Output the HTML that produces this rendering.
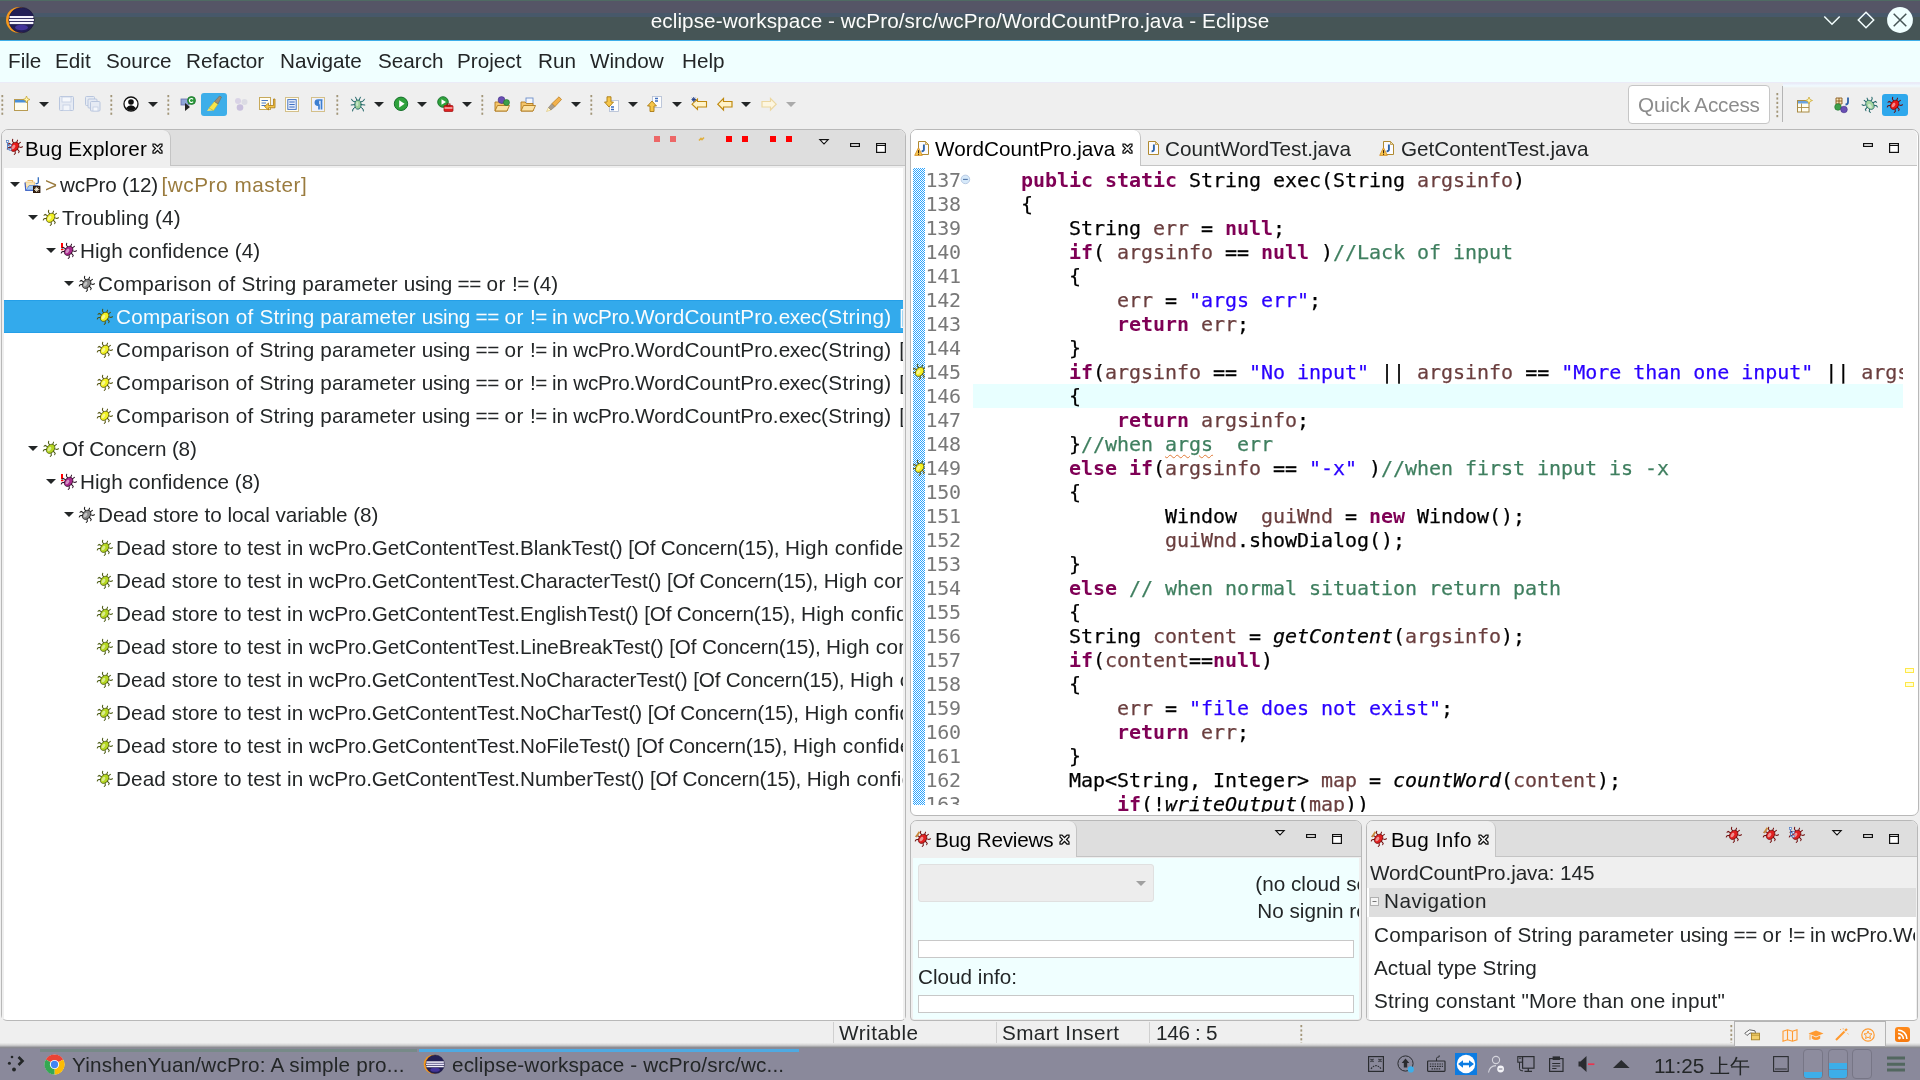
<!DOCTYPE html>
<html><head><meta charset="utf-8"><title>Eclipse</title><style>
html,body{margin:0;padding:0;}
body{width:1920px;height:1080px;position:relative;overflow:hidden;background:#efefef;font-family:"Liberation Sans", sans-serif;font-size:20.7px;color:#232627;}
div,span{position:absolute;white-space:pre;box-sizing:border-box;}
.t{line-height:24px;height:24px;}
svg{position:absolute;overflow:visible;}
.code{font-family:"DejaVu Sans Mono", "Liberation Mono", monospace;font-size:20px;line-height:24px;height:24px;color:#000;left:973px;letter-spacing:-0.041px;-webkit-text-stroke:0.25px currentColor;}
.code span{position:static;}
.ln{font-family:"DejaVu Sans Mono", "Liberation Mono", monospace;font-size:20px;line-height:24px;height:24px;color:#787878;left:926px;letter-spacing:-0.35px;}
.k{color:#7f0055;font-weight:bold;-webkit-text-stroke:0;}
.v{color:#6a3e3e;}
.s{color:#2a00ff;}
.c{color:#3f7f5f;}
.i{font-style:italic;}
.row{height:33px;line-height:33px;letter-spacing:.04px;}
.clip{overflow:hidden;}
</style></head><body>
<div id="root" style="left:0;top:0;width:1920px;height:1080px;will-change:transform">
<div style="left:0px;top:0px;width:1920px;height:41px;background:#465556;"></div>
<div style="left:0px;top:0px;width:1920px;height:13px;background:#555566;"></div>
<div style="left:0px;top:0px;width:1920px;height:1px;background:#4f6a63;"></div>
<div style="left:0px;top:13px;width:1920px;height:4px;background:#47586a;"></div>
<div style="left:0px;top:40px;width:1920px;height:1px;background:#3daee9;"></div>
<div class="t" style="left:0px;top:9px;width:1920px;text-align:center;color:#fcfcfc;letter-spacing:.08px">eclipse-workspace - wcPro/src/wcPro/WordCountPro.java - Eclipse</div>
<svg style="left:5px;top:6px" width="30" height="28" viewBox="0 0 30 28"><circle cx="14" cy="14" r="13" fill="#f7991c"/><circle cx="16.5" cy="14.1" r="12.7" fill="#231f55" stroke="#1a1438" stroke-width="0.6"/><ellipse cx="16.5" cy="21.5" rx="6.5" ry="2.8" fill="#4a38a8" opacity=".85"/><rect x="4.6" y="10" width="23.8" height="2.1" fill="#f4f2fb"/><rect x="4.1" y="13" width="24.8" height="2.1" fill="#f4f2fb"/><rect x="4.6" y="16" width="23.8" height="2.1" fill="#f4f2fb"/></svg>
<svg style="left:1820px;top:8px" width="100" height="26" viewBox="0 0 100 26"><path d="M4.3 8.5 L12 16.3 L19.7 8.5" stroke="#f4ffff" stroke-width="1.5" fill="none"/><path d="M46 4.3 L53.7 12 L46 19.7 L38.3 12 Z" stroke="#f4ffff" stroke-width="1.5" fill="none"/><circle cx="80" cy="12" r="12.9" fill="#f0ffff"/><path d="M73.7 5.7 L86.3 18.3 M86.3 5.7 L73.7 18.3" stroke="#465556" stroke-width="1.5"/></svg>
<div style="left:0px;top:41px;width:1920px;height:42px;background:#f0ffff;"></div>
<div style="left:0px;top:82px;width:1920px;height:1px;background:#ebebf7;"></div>
<div class="t" style="left:8px;top:49px;">File</div>
<div class="t" style="left:55px;top:49px;">Edit</div>
<div class="t" style="left:106px;top:49px;">Source</div>
<div class="t" style="left:186px;top:49px;">Refactor</div>
<div class="t" style="left:280px;top:49px;">Navigate</div>
<div class="t" style="left:378px;top:49px;">Search</div>
<div class="t" style="left:457px;top:49px;">Project</div>
<div class="t" style="left:538px;top:49px;">Run</div>
<div class="t" style="left:590px;top:49px;">Window</div>
<div class="t" style="left:682px;top:49px;">Help</div>
<div style="left:0px;top:83px;width:1920px;height:46px;background:#efefef;"></div>
<svg style="left:1px;top:95px" width="3" height="20" viewBox="0 0 3 20"><rect x="0.4" y="0.0" width="1.8" height="2.2" fill="#a29679"/><rect x="0.4" y="4.4" width="1.8" height="2.2" fill="#a29679"/><rect x="0.4" y="8.8" width="1.8" height="2.2" fill="#a29679"/><rect x="0.4" y="13.2" width="1.8" height="2.2" fill="#a29679"/><rect x="0.4" y="17.6" width="1.8" height="2.2" fill="#a29679"/></svg>
<svg style="left:110px;top:95px" width="3" height="20" viewBox="0 0 3 20"><rect x="0.4" y="0.0" width="1.8" height="2.2" fill="#a29679"/><rect x="0.4" y="4.4" width="1.8" height="2.2" fill="#a29679"/><rect x="0.4" y="8.8" width="1.8" height="2.2" fill="#a29679"/><rect x="0.4" y="13.2" width="1.8" height="2.2" fill="#a29679"/><rect x="0.4" y="17.6" width="1.8" height="2.2" fill="#a29679"/></svg>
<svg style="left:167px;top:95px" width="3" height="20" viewBox="0 0 3 20"><rect x="0.4" y="0.0" width="1.8" height="2.2" fill="#a29679"/><rect x="0.4" y="4.4" width="1.8" height="2.2" fill="#a29679"/><rect x="0.4" y="8.8" width="1.8" height="2.2" fill="#a29679"/><rect x="0.4" y="13.2" width="1.8" height="2.2" fill="#a29679"/><rect x="0.4" y="17.6" width="1.8" height="2.2" fill="#a29679"/></svg>
<svg style="left:336px;top:95px" width="3" height="20" viewBox="0 0 3 20"><rect x="0.4" y="0.0" width="1.8" height="2.2" fill="#a29679"/><rect x="0.4" y="4.4" width="1.8" height="2.2" fill="#a29679"/><rect x="0.4" y="8.8" width="1.8" height="2.2" fill="#a29679"/><rect x="0.4" y="13.2" width="1.8" height="2.2" fill="#a29679"/><rect x="0.4" y="17.6" width="1.8" height="2.2" fill="#a29679"/></svg>
<svg style="left:481px;top:95px" width="3" height="20" viewBox="0 0 3 20"><rect x="0.4" y="0.0" width="1.8" height="2.2" fill="#a29679"/><rect x="0.4" y="4.4" width="1.8" height="2.2" fill="#a29679"/><rect x="0.4" y="8.8" width="1.8" height="2.2" fill="#a29679"/><rect x="0.4" y="13.2" width="1.8" height="2.2" fill="#a29679"/><rect x="0.4" y="17.6" width="1.8" height="2.2" fill="#a29679"/></svg>
<svg style="left:590px;top:95px" width="3" height="20" viewBox="0 0 3 20"><rect x="0.4" y="0.0" width="1.8" height="2.2" fill="#a29679"/><rect x="0.4" y="4.4" width="1.8" height="2.2" fill="#a29679"/><rect x="0.4" y="8.8" width="1.8" height="2.2" fill="#a29679"/><rect x="0.4" y="13.2" width="1.8" height="2.2" fill="#a29679"/><rect x="0.4" y="17.6" width="1.8" height="2.2" fill="#a29679"/></svg>
<svg style="left:39px;top:102px" width="10" height="5" viewBox="0 0 10 5"><path d="M0 0 L10 0 L5.0 5 Z" fill="#232627"/></svg>
<svg style="left:148px;top:102px" width="10" height="5" viewBox="0 0 10 5"><path d="M0 0 L10 0 L5.0 5 Z" fill="#232627"/></svg>
<svg style="left:374px;top:102px" width="10" height="5" viewBox="0 0 10 5"><path d="M0 0 L10 0 L5.0 5 Z" fill="#232627"/></svg>
<svg style="left:417px;top:102px" width="10" height="5" viewBox="0 0 10 5"><path d="M0 0 L10 0 L5.0 5 Z" fill="#232627"/></svg>
<svg style="left:462px;top:102px" width="10" height="5" viewBox="0 0 10 5"><path d="M0 0 L10 0 L5.0 5 Z" fill="#232627"/></svg>
<svg style="left:571px;top:102px" width="10" height="5" viewBox="0 0 10 5"><path d="M0 0 L10 0 L5.0 5 Z" fill="#232627"/></svg>
<svg style="left:628px;top:102px" width="10" height="5" viewBox="0 0 10 5"><path d="M0 0 L10 0 L5.0 5 Z" fill="#232627"/></svg>
<svg style="left:672px;top:102px" width="10" height="5" viewBox="0 0 10 5"><path d="M0 0 L10 0 L5.0 5 Z" fill="#232627"/></svg>
<svg style="left:741px;top:102px" width="10" height="5" viewBox="0 0 10 5"><path d="M0 0 L10 0 L5.0 5 Z" fill="#232627"/></svg>
<svg style="left:786px;top:102px" width="10" height="5" viewBox="0 0 10 5"><path d="M0 0 L10 0 L5.0 5 Z" fill="#aaaaaa"/></svg>
<svg style="left:14px;top:96px" width="16" height="16" viewBox="0 0 16 16"><rect x="0.5" y="3.5" width="13" height="11" fill="#fffdf0" stroke="#b89b52"/><rect x="1" y="4" width="12" height="2.5" fill="#4a90d9"/><path d="M12.5 0 L13.5 2.5 L16 3.5 L13.5 4.5 L12.5 7 L11.5 4.5 L9 3.5 L11.5 2.5 Z" fill="#fff6b0" stroke="#c9a227" stroke-width="0.7"/></svg>
<svg style="left:59px;top:96px" width="16" height="16" viewBox="0 0 16 16"><rect x="0.5" y="0.5" width="14" height="14" rx="1" fill="#e6ebf4" stroke="#b9c6de"/><rect x="3" y="1" width="9" height="5" fill="#f6f8fc" stroke="#c3cee3" stroke-width="0.8"/><rect x="4" y="9" width="7" height="5.5" fill="#f2f5fa" stroke="#c3cee3" stroke-width="0.8"/></svg>
<svg style="left:85px;top:96px" width="16" height="16" viewBox="0 0 16 16"><rect x="0.5" y="0.5" width="9" height="9" rx="1" fill="#e6ebf4" stroke="#b9c6de"/><rect x="3" y="3" width="9" height="9" rx="1" fill="#e6ebf4" stroke="#b9c6de"/><rect x="5.5" y="5.5" width="9.5" height="9.5" rx="1" fill="#e6ebf4" stroke="#b9c6de"/><rect x="8" y="11" width="5" height="4" fill="#f6f8fc" stroke="#c3cee3" stroke-width="0.8"/></svg>
<svg style="left:123px;top:96px" width="16" height="16" viewBox="0 0 16 16"><circle cx="8" cy="8" r="7" fill="#fff" stroke="#111" stroke-width="1.3"/><circle cx="8" cy="6" r="2.8" fill="#111"/><path d="M2.8 12.2 Q8 6.5 13.2 12.2 Q8 17 2.8 12.2 Z" fill="#111"/></svg>
<svg style="left:180px;top:96px" width="16" height="16" viewBox="0 0 16 16"><rect x="1" y="3" width="8" height="6" fill="#8fa6d8" stroke="#6a6fae" stroke-width="0.8"/><path d="M5 7 L5 15 L10 11 Z" fill="#222"/><circle cx="11.5" cy="4.5" r="4" fill="#2c9b3c" stroke="#166b25" stroke-width="0.7"/><path d="M13 3.3 A2 2 0 1 0 13 5.7" stroke="#fff" stroke-width="1.1" fill="none"/></svg>
<div style="left:201px;top:93px;width:26px;height:23px;background:#3daee9;border-radius:3px"></div>
<svg style="left:206px;top:96px" width="16" height="16" viewBox="0 0 16 16"><path d="M1 15 L7 14.5 L3 12 Z" fill="#f3e26b"/><path d="M3 12 L7.5 14.5 L12 8 L8.5 5.5 Z" fill="#f7e54a" stroke="#d1b51a" stroke-width="0.5"/><path d="M8.5 5.5 L12 8 L15.5 1 L13.5 0 Z" fill="#9c8d74" stroke="#6e6250" stroke-width="0.5"/></svg>
<svg style="left:233px;top:96px" width="16" height="16" viewBox="0 0 16 16"><circle cx="5" cy="5" r="3" fill="#d9d3e6"/><circle cx="11.5" cy="6" r="3" fill="#dcdce4"/><circle cx="7" cy="11.5" r="3.3" fill="#c9c0dd"/></svg>
<svg style="left:259px;top:96px" width="16" height="16" viewBox="0 0 16 16"><rect x="0.5" y="1.5" width="11" height="12" fill="#fffdf2" stroke="#c7a95a"/><path d="M2.5 4.5 H9 M2.5 7 H7 M2.5 9.5 H9" stroke="#4a78c2" stroke-width="1"/><path d="M14.5 3 V9.5 H9.5 V7 L5.5 10.5 L9.5 14 V11.8 H16 V3 Z" fill="#f6c64a" stroke="#a97a14" stroke-width="0.8"/></svg>
<svg style="left:285px;top:96px" width="16" height="16" viewBox="0 0 16 16"><rect x="0.5" y="1.5" width="13" height="14" fill="#fffdf2" stroke="#d4c08a"/><rect x="2.8" y="3.6" width="8.4" height="9.8" fill="#e5edfb" stroke="#3d6dc0" stroke-width="0.9"/><path d="M4.3 6 H9.7 M4.3 8.5 H9.7 M4.3 11 H9.7" stroke="#3d6dc0" stroke-width="1"/></svg>
<svg style="left:311px;top:96px" width="16" height="16" viewBox="0 0 16 16"><rect x="0.5" y="1.5" width="13" height="14" fill="#eef1fb" stroke="#d4c08a"/><path d="M11.5 4 H7 A2.6 2.6 0 0 0 7 9.2 H8 V13.5 M10.5 4 V13.5" stroke="#3d7fd0" stroke-width="1.7" fill="none"/><path d="M7 4.3 A2.3 2.3 0 0 0 7 8.9 H8.2 V4.3 Z" fill="#3d7fd0"/></svg>
<svg style="left:350px;top:96px" width="16" height="16" viewBox="0 0 16 16"><g stroke="#1d6466" stroke-width="1" fill="none" stroke-linecap="round"><path d="M5.4 6 L2.6 5 L1.6 3.2 M5 8.6 L1.2 9 M5.4 11 L3 13 L2.6 15 M10.6 6 L13.4 5 L14.4 3.2 M11 8.6 L14.8 9 M10.6 11 L13 13 L13.4 15 M6.8 4 L5.6 1.2 M9.2 4 L10.4 1.2"/><ellipse cx="8" cy="8.6" rx="3.2" ry="4.6" fill="#9ccf9a" stroke="#1d6466" stroke-width="0.9"/><ellipse cx="7.2" cy="8" rx="1.2" ry="2.2" fill="#fff" fill-opacity="0.45" stroke="none"/></g></svg>
<svg style="left:393px;top:96px" width="16" height="16" viewBox="0 0 16 16"><circle cx="8" cy="7.8" r="6.7" fill="#2fa23c" stroke="#14702a" stroke-width="1"/><path d="M6.2 4.2 L11.6 7.8 L6.2 11.4 Z" fill="#fff"/></svg>
<svg style="left:437px;top:96px" width="16" height="16" viewBox="0 0 16 16"><circle cx="6" cy="6" r="5.3" fill="#2fa23c" stroke="#14702a" stroke-width="0.9"/><path d="M4.5 3.2 L9 6 L4.5 8.8 Z" fill="#fff"/><rect x="7" y="9.5" width="9" height="6" rx="1" fill="#e02020" stroke="#9a0d0d" stroke-width="0.7"/><rect x="10" y="8" width="3" height="2" fill="none" stroke="#9a0d0d" stroke-width="0.9"/><rect x="7.5" y="11.5" width="8" height="1" fill="#fff"/></svg>
<svg style="left:494px;top:96px" width="16" height="16" viewBox="0 0 16 16"><path d="M1 6 H6 L7.5 7.5 H13 V15 H1 Z" fill="#f4c56a" stroke="#b17a1d" stroke-width="0.9"/><path d="M1 15 L3.5 9.5 H15.5 L13 15 Z" fill="#fbe2a5" stroke="#b17a1d" stroke-width="0.9"/><circle cx="7.5" cy="4" r="3.4" fill="#6a4fb3" stroke="#43318a" stroke-width="0.6"/><circle cx="12.5" cy="6.5" r="3" fill="#3ea04a" stroke="#1f6e2c" stroke-width="0.6"/></svg>
<svg style="left:520px;top:96px" width="16" height="16" viewBox="0 0 16 16"><rect x="6" y="2" width="7" height="6" fill="#f3f6fc" stroke="#6d8fcb" stroke-width="0.9"/><path d="M1 6 H5 L6.5 7.5 H13 V15 H1 Z" fill="#f4c56a" stroke="#b17a1d" stroke-width="0.9"/><path d="M1 15 L3.5 9.5 H15.5 L13 15 Z" fill="#fbe2a5" stroke="#b17a1d" stroke-width="0.9"/></svg>
<svg style="left:546px;top:96px" width="16" height="16" viewBox="0 0 16 16"><path d="M0.5 15.5 L5 14 L2.5 11.5 Z" fill="#fff7c9" stroke="#d9b95a" stroke-width="0.5"/><path d="M2.5 11.5 L5 14 L9 10.5 L6 7.5 Z" fill="#a99d8f" stroke="#7a7064" stroke-width="0.5"/><path d="M6 7.5 L9 10.5 L15.5 3.5 L13 0.8 Z" fill="#f3b14c" stroke="#b57a1c" stroke-width="0.7"/></svg>
<svg style="left:604px;top:96px" width="16" height="16" viewBox="0 0 16 16"><rect x="5.5" y="4.5" width="9" height="11" fill="#fdfdfd" stroke="#aebbd3" stroke-width="0.8"/><path d="M7 11 H10 M7 13.5 H10" stroke="#3d6dc0" stroke-width="1.4"/><path d="M3 0.8 H7 V6 H9.5 L5 11 L0.5 6 H3 Z" fill="#f6c64a" stroke="#a97a14" stroke-width="0.9"/></svg>
<svg style="left:647px;top:96px" width="16" height="16" viewBox="0 0 16 16"><rect x="5.5" y="0.5" width="9" height="11" fill="#fdfdfd" stroke="#aebbd3" stroke-width="0.8"/><path d="M8 2.5 H11 M8 5 H11" stroke="#3d6dc0" stroke-width="1.4"/><path d="M3 15.5 H7 V10 H9.5 L5 5 L0.5 10 H3 Z" fill="#f6c64a" stroke="#a97a14" stroke-width="0.9"/></svg>
<svg style="left:691px;top:96px" width="16" height="16" viewBox="0 0 16 16"><path d="M6.5 3 L6.5 5.5 H15.5 V11 H6.5 V13.5 L1 8.2 Z" fill="#fff3c8" stroke="#c08a10" stroke-width="1.1"/><path d="M0.5 3.5 H5 M2.7 1 V6 M1 1.8 L4.4 5.2 M4.4 1.8 L1 5.2" stroke="#233f8a" stroke-width="0.9"/></svg>
<svg style="left:717px;top:96px" width="16" height="16" viewBox="0 0 16 16"><path d="M6.5 2.5 L6.5 5.5 H15 V11 H6.5 V14 L0.8 8.2 Z" fill="#fff3c8" stroke="#c08a10" stroke-width="1.2"/></svg>
<svg style="left:761px;top:96px" width="16" height="16" viewBox="0 0 16 16"><path d="M9.5 2.5 L9.5 5.5 H1 V11 H9.5 V14 L15.2 8.2 Z" fill="#fdf6e0" stroke="#ecd7a0" stroke-width="1.2"/></svg>
<div style="left:1628px;top:85px;width:142px;height:39px;background:#ffffff;border:1px solid #c6c6c6;border-radius:4px"></div>
<div class="t" style="left:1638px;top:93px;color:#8c8c8c;letter-spacing:-.2px">Quick Access</div>
<svg style="left:1776px;top:93px" width="3" height="24" viewBox="0 0 3 24"><rect x="0.4" y="0.0" width="1.8" height="2.2" fill="#a29679"/><rect x="0.4" y="4.4" width="1.8" height="2.2" fill="#a29679"/><rect x="0.4" y="8.8" width="1.8" height="2.2" fill="#a29679"/><rect x="0.4" y="13.2" width="1.8" height="2.2" fill="#a29679"/><rect x="0.4" y="17.6" width="1.8" height="2.2" fill="#a29679"/><rect x="0.4" y="22.0" width="1.8" height="2.2" fill="#a29679"/></svg>
<div style="left:1782px;top:86px;width:1px;height:36px;background:#b4b4b4;"></div>
<svg style="left:1797px;top:97px" width="16" height="16" viewBox="0 0 16 16"><rect x="0.5" y="3.5" width="11.5" height="11.5" fill="#fffdf0" stroke="#a98b45"/><rect x="1" y="4" width="10.5" height="2.5" fill="#6ba3e0"/><path d="M4.5 6.5 V15 M0.5 10.5 H12" stroke="#a98b45" stroke-width="0.9"/><path d="M12 0 L13 2.5 L15.5 3.5 L13 4.5 L12 7 L11 4.5 L8.5 3.5 L11 2.5 Z" fill="#fff6b0" stroke="#c9a227" stroke-width="0.7"/></svg>
<svg style="left:1834px;top:97px" width="16" height="16" viewBox="0 0 16 16"><path d="M2 1 H8 V7 H2 Z M5 1 V7 M2 4 H8" fill="#f6e3b8" stroke="#8a5a1c" stroke-width="0.9"/><path d="M14 0.5 V5 Q14 7.5 11.5 7.5" stroke="#2b5fa8" stroke-width="1.8" fill="none"/><circle cx="4" cy="10" r="3.3" fill="#3ea04a" stroke="#1f6e2c" stroke-width="0.6"/><circle cx="10" cy="12.5" r="3.3" fill="#6a4fb3" stroke="#43318a" stroke-width="0.6"/></svg>
<svg style="left:1862px;top:97px" width="16" height="16" viewBox="0 0 16 16"><g transform="rotate(-38 7.8 7.6)" stroke="#1d6466" stroke-width="1" fill="none" stroke-linecap="round"><path d="M5.2 5.6 L2.4 4.6 L1.6 3 M4.9 8 L1.4 8.6 L1 10 M5.4 10.4 L3.2 12.6 L3.4 14.2 M10.4 5.6 L13.2 4.6 L14 3 M10.7 8 L14.2 8.6 L14.6 10 M10.2 10.4 L12.4 12.6 L12.2 14.2 M6.8 3.6 L6 0.8 M8.8 3.6 L9.6 0.8"/><ellipse cx="7.8" cy="7.9" rx="3.7" ry="5.1" fill="#a4d4a0" stroke="#1d6466" stroke-width="0.7"/><ellipse cx="7" cy="8.8" rx="1.5" ry="2.5" fill="#fff" fill-opacity="0.5" stroke="none"/></g></svg>
<div style="left:1783px;top:83px;width:137px;height:5px;background:linear-gradient(#e9e9f8,#f0fbff 60%,#efefef);"></div>
<div style="left:1882px;top:94px;width:26px;height:22px;background:#2fa8ec;border-radius:3px"></div>
<svg style="left:1887px;top:97px" width="16" height="16" viewBox="0 0 16 16"><g transform="rotate(38 7.8 7.6)" stroke="#6e0a0a" stroke-width="1" fill="none" stroke-linecap="round"><path d="M5.2 5.6 L2.4 4.6 L1.6 3 M4.9 8 L1.4 8.6 L1 10 M5.4 10.4 L3.2 12.6 L3.4 14.2 M10.4 5.6 L13.2 4.6 L14 3 M10.7 8 L14.2 8.6 L14.6 10 M10.2 10.4 L12.4 12.6 L12.2 14.2 M6.8 3.6 L6 0.8 M8.8 3.6 L9.6 0.8"/><ellipse cx="7.8" cy="7.9" rx="3.7" ry="5.1" fill="#e81818" stroke="#6e0a0a" stroke-width="0.7"/><ellipse cx="7" cy="8.8" rx="1.5" ry="2.5" fill="#fff" fill-opacity="0.5" stroke="none"/></g></svg>
<div style="left:1px;top:129px;width:905px;height:892px;background:#ffffff;border:1px solid #b8b8b8;border-radius:7px 7px 5px 6px"></div>
<div style="left:2px;top:130px;width:903px;height:35px;background:#dedede;border-radius:6px 6px 0 0"></div>
<div style="left:2px;top:165px;width:903px;height:1px;background:#c4c4c4;"></div>
<div style="left:2px;top:130px;width:169px;height:36px;background:#efefef;border-radius:6px 8px 0 0;border-right:1px solid #c4c4c4"></div>
<svg style="left:7px;top:139px" width="16" height="16" viewBox="0 0 16 16"><g transform="rotate(38 7.8 7.6)" stroke="#6e0a0a" stroke-width="1" fill="none" stroke-linecap="round"><path d="M5.2 5.6 L2.4 4.6 L1.6 3 M4.9 8 L1.4 8.6 L1 10 M5.4 10.4 L3.2 12.6 L3.4 14.2 M10.4 5.6 L13.2 4.6 L14 3 M10.7 8 L14.2 8.6 L14.6 10 M10.2 10.4 L12.4 12.6 L12.2 14.2 M6.8 3.6 L6 0.8 M8.8 3.6 L9.6 0.8"/><ellipse cx="7.8" cy="7.9" rx="3.7" ry="5.1" fill="#e81818" stroke="#6e0a0a" stroke-width="0.7"/><ellipse cx="7" cy="8.8" rx="1.5" ry="2.5" fill="#fff" fill-opacity="0.5" stroke="none"/></g></svg>
<svg style="left:6px;top:140px" width="8" height="12" viewBox="0 0 8 12"><path d="M1.5 1.5 V9.2 H3.5 M1.5 5.5 H3.5" stroke="#4a78c2" stroke-width="0.9" fill="none"/><rect x="0.5" y="0.5" width="2" height="2" fill="#fff" stroke="#4a78c2" stroke-width="0.7"/><rect x="3.2" y="4.5" width="2" height="2" fill="#fff" stroke="#4a78c2" stroke-width="0.7"/><rect x="3.2" y="8.2" width="2" height="2" fill="#fff" stroke="#4a78c2" stroke-width="0.7"/></svg>
<div class="t" style="left:25px;top:137px;color:#000;letter-spacing:.2px">Bug Explorer</div>
<svg style="left:152px;top:143px" width="11" height="11" viewBox="0 0 11 11"><path d="M1 1 L3 1 L5.5 3.5 L8 1 L10 1 L10 3 L7.5 5.5 L10 8 L10 10 L8 10 L5.5 7.5 L3 10 L1 10 L1 8 L3.5 5.5 L1 3 Z" fill="#fdfdfd" stroke="#111" stroke-width="1.25"/></svg>
<div style="left:654px;top:136px;width:6px;height:6px;background:#ec6767;"></div>
<div style="left:670px;top:136px;width:6px;height:6px;background:#ec6767;"></div>
<div style="left:726px;top:136px;width:6px;height:6px;background:#ff0000;"></div>
<div style="left:742px;top:136px;width:6px;height:6px;background:#ff0000;"></div>
<div style="left:770px;top:136px;width:6px;height:6px;background:#ff0000;"></div>
<div style="left:786px;top:136px;width:6px;height:6px;background:#ff0000;"></div>
<svg style="left:698px;top:136px" width="7" height="6" viewBox="0 0 7 6"><path d="M1 4.5 L3 2.5 L4 3.5 L6 1.5" stroke="#e0b040" stroke-width="1.6" fill="none"/></svg>
<svg style="left:819px;top:139px" width="10" height="6" viewBox="0 0 10 6"><path d="M0.8 0.6 L9.2 0.6 L5 5 Z" fill="#fff" stroke="#111" stroke-width="1.1"/></svg>
<svg style="left:850px;top:143px" width="10" height="4" viewBox="0 0 10 4"><rect x="0.6" y="0.6" width="8.8" height="2.8" fill="#fff" stroke="#111" stroke-width="1.2"/></svg>
<svg style="left:876px;top:143px" width="10" height="10" viewBox="0 0 10 10"><rect x="0.6" y="0.6" width="8.8" height="8.8" fill="#fff" stroke="#111" stroke-width="1.2"/><path d="M0.6 2.5 H9.4" stroke="#111" stroke-width="1"/></svg>
<div style="left:2px;top:166px;width:902px;height:2px;background:#efefef;"></div>
<div style="left:2px;top:166px;width:2px;height:853px;background:#efefef;"></div>
<div style="left:903px;top:166px;width:2px;height:853px;background:#f0f0f0;"></div>
<div class="clip" style="left:3px;top:166px;width:900px;height:853px">
<svg style="left:7px;top:16px" width="10" height="5" viewBox="0 0 10 5"><path d="M0 0 L10 0 L5.0 5 Z" fill="#232627"/></svg>
<svg style="left:21px;top:11px" width="17" height="16" viewBox="0 0 17 16"><path d="M3.5 3.5 H8.5 V5" stroke="#e8b868" stroke-width="1.2" fill="none"/><path d="M1.5 5 H10.5 V10 H1.5 Z" fill="#fbe6b4" stroke="#e9c27a" stroke-width="0.8"/><path d="M1 5.5 L1.8 13.5 H11" stroke="#3f5fc0" stroke-width="1.2" fill="none"/><path d="M2.2 13 L5.2 8.5 H14 L11 13 Z" fill="#a9cdf3" stroke="#5a86d8" stroke-width="0.8"/><path d="M14.3 0.3 V5 Q14.3 6.8 12.3 6.6 L11.6 6.3" stroke="#2f6cc0" stroke-width="1.3" fill="none"/><rect x="9" y="8.8" width="7.4" height="7.2" fill="#2a170a"/><path d="M12.7 9.8 V15 M10.1 12.4 H15.3 M10.9 10.6 L14.5 14.2 M14.5 10.6 L10.9 14.2" stroke="#fff8e0" stroke-width="0.9"/></svg>
<div class="row" style="left:42px;top:2px;color:#232627"><span style="color:#9a7b3e;left:0;top:0">&gt;</span><span style="left:15px;top:0;letter-spacing:-.2px">wcPro (12)</span><span style="color:#9a7b3e;letter-spacing:.56px;left:116.5px;top:0">[wcPro master]</span></div>
<svg style="left:25px;top:49px" width="10" height="5" viewBox="0 0 10 5"><path d="M0 0 L10 0 L5.0 5 Z" fill="#232627"/></svg>
<svg style="left:40px;top:44px" width="16" height="16" viewBox="0 0 16 16"><g transform="rotate(38 7.8 7.6)" stroke="#4f4f0a" stroke-width="1" fill="none" stroke-linecap="round"><path d="M5.2 5.6 L2.4 4.6 L1.6 3 M4.9 8 L1.4 8.6 L1 10 M5.4 10.4 L3.2 12.6 L3.4 14.2 M10.4 5.6 L13.2 4.6 L14 3 M10.7 8 L14.2 8.6 L14.6 10 M10.2 10.4 L12.4 12.6 L12.2 14.2 M6.8 3.6 L6 0.8 M8.8 3.6 L9.6 0.8"/><ellipse cx="7.8" cy="7.9" rx="3.7" ry="5.1" fill="#f0f020" stroke="#4f4f0a" stroke-width="0.7"/><ellipse cx="7" cy="8.8" rx="1.5" ry="2.5" fill="#fff" fill-opacity="0.5" stroke="none"/></g></svg>
<div class="row" style="left:59px;top:35px;color:#232627"><span style="position:static;letter-spacing:.18px">Troubling (4)</span></div>
<svg style="left:43px;top:82px" width="10" height="5" viewBox="0 0 10 5"><path d="M0 0 L10 0 L5.0 5 Z" fill="#232627"/></svg>
<svg style="left:58px;top:77px" width="16" height="16" viewBox="0 0 16 16"><rect x="0" y="0" width="2" height="5" fill="#f00"/><rect x="0" y="6" width="2.5" height="1.2" fill="#f00"/><g transform="rotate(38 7.8 7.6)" stroke="#2a0a22" stroke-width="1" fill="none" stroke-linecap="round"><path d="M5.2 5.6 L2.4 4.6 L1.6 3 M4.9 8 L1.4 8.6 L1 10 M5.4 10.4 L3.2 12.6 L3.4 14.2 M10.4 5.6 L13.2 4.6 L14 3 M10.7 8 L14.2 8.6 L14.6 10 M10.2 10.4 L12.4 12.6 L12.2 14.2 M6.8 3.6 L6 0.8 M8.8 3.6 L9.6 0.8"/><ellipse cx="7.8" cy="7.9" rx="3.7" ry="5.1" fill="#a8288c" stroke="#2a0a22" stroke-width="0.7"/><ellipse cx="7" cy="8.8" rx="1.5" ry="2.5" fill="#fff" fill-opacity="0.5" stroke="none"/></g></svg>
<div class="row" style="left:77px;top:68px;color:#232627">High confidence (4)</div>
<svg style="left:61px;top:115px" width="10" height="5" viewBox="0 0 10 5"><path d="M0 0 L10 0 L5.0 5 Z" fill="#232627"/></svg>
<svg style="left:76px;top:110px" width="16" height="16" viewBox="0 0 16 16"><g transform="rotate(38 7.8 7.6)" stroke="#111" stroke-width="1" fill="none" stroke-linecap="round"><path d="M5.2 5.6 L2.4 4.6 L1.6 3 M4.9 8 L1.4 8.6 L1 10 M5.4 10.4 L3.2 12.6 L3.4 14.2 M10.4 5.6 L13.2 4.6 L14 3 M10.7 8 L14.2 8.6 L14.6 10 M10.2 10.4 L12.4 12.6 L12.2 14.2 M6.8 3.6 L6 0.8 M8.8 3.6 L9.6 0.8"/><ellipse cx="7.8" cy="7.9" rx="3.7" ry="5.1" fill="#8a8a8a" stroke="#111" stroke-width="0.7"/><ellipse cx="7" cy="8.8" rx="1.5" ry="2.5" fill="#fff" fill-opacity="0.5" stroke="none"/></g></svg>
<div class="row" style="left:95px;top:101px;color:#232627"><span style="position:static;letter-spacing:0.23px">Comparison of </span><span style="position:static;letter-spacing:0.14px">String parameter </span><span style="position:static;letter-spacing:-0.25px">using == </span><span style="position:static;letter-spacing:0.39px">or </span><span style="position:static;letter-spacing:-0.5px">!= </span><span style="position:static;margin-left:-1.2px">(4)</span></div>
<div style="left:1px;top:134px;width:900px;height:33px;background:#33aaec;border-top:1px solid #249fe8;border-bottom:1px solid #249fe8"></div>
<svg style="left:94px;top:143px" width="16" height="16" viewBox="0 0 16 16"><g transform="rotate(38 7.8 7.6)" stroke="#4f4f0a" stroke-width="1" fill="none" stroke-linecap="round"><path d="M5.2 5.6 L2.4 4.6 L1.6 3 M4.9 8 L1.4 8.6 L1 10 M5.4 10.4 L3.2 12.6 L3.4 14.2 M10.4 5.6 L13.2 4.6 L14 3 M10.7 8 L14.2 8.6 L14.6 10 M10.2 10.4 L12.4 12.6 L12.2 14.2 M6.8 3.6 L6 0.8 M8.8 3.6 L9.6 0.8"/><ellipse cx="7.8" cy="7.9" rx="3.7" ry="5.1" fill="#f0f020" stroke="#4f4f0a" stroke-width="0.7"/><ellipse cx="7" cy="8.8" rx="1.5" ry="2.5" fill="#fff" fill-opacity="0.5" stroke="none"/></g></svg>
<div class="row" style="left:113px;top:134px;color:#fcfcfc"><span style="position:static;letter-spacing:0.23px">Comparison of </span><span style="position:static;letter-spacing:0.14px">String parameter </span><span style="position:static;letter-spacing:-0.25px">using == </span><span style="position:static;letter-spacing:0.39px">or </span><span style="position:static;letter-spacing:-0.5px">!= </span><span style="position:static;letter-spacing:-0.18px">in </span><span style="position:static;letter-spacing:-0.26px">wcPro.</span><span style="position:static;letter-spacing:0.12px">WordCountPro.</span><span style="position:static;letter-spacing:-0.35px">exec</span><span style="position:static;letter-spacing:0.34px">(String)</span><span style="position:static;margin-left:-4px">  [Troubling(11), High confidence]</span></div>
<svg style="left:94px;top:176px" width="16" height="16" viewBox="0 0 16 16"><g transform="rotate(38 7.8 7.6)" stroke="#4f4f0a" stroke-width="1" fill="none" stroke-linecap="round"><path d="M5.2 5.6 L2.4 4.6 L1.6 3 M4.9 8 L1.4 8.6 L1 10 M5.4 10.4 L3.2 12.6 L3.4 14.2 M10.4 5.6 L13.2 4.6 L14 3 M10.7 8 L14.2 8.6 L14.6 10 M10.2 10.4 L12.4 12.6 L12.2 14.2 M6.8 3.6 L6 0.8 M8.8 3.6 L9.6 0.8"/><ellipse cx="7.8" cy="7.9" rx="3.7" ry="5.1" fill="#f0f020" stroke="#4f4f0a" stroke-width="0.7"/><ellipse cx="7" cy="8.8" rx="1.5" ry="2.5" fill="#fff" fill-opacity="0.5" stroke="none"/></g></svg>
<div class="row" style="left:113px;top:167px;color:#232627"><span style="position:static;letter-spacing:0.23px">Comparison of </span><span style="position:static;letter-spacing:0.14px">String parameter </span><span style="position:static;letter-spacing:-0.25px">using == </span><span style="position:static;letter-spacing:0.39px">or </span><span style="position:static;letter-spacing:-0.5px">!= </span><span style="position:static;letter-spacing:-0.18px">in </span><span style="position:static;letter-spacing:-0.26px">wcPro.</span><span style="position:static;letter-spacing:0.12px">WordCountPro.</span><span style="position:static;letter-spacing:-0.35px">exec</span><span style="position:static;letter-spacing:0.34px">(String)</span><span style="position:static;margin-left:-4px">  [Troubling(11), High confidence]</span></div>
<svg style="left:94px;top:209px" width="16" height="16" viewBox="0 0 16 16"><g transform="rotate(38 7.8 7.6)" stroke="#4f4f0a" stroke-width="1" fill="none" stroke-linecap="round"><path d="M5.2 5.6 L2.4 4.6 L1.6 3 M4.9 8 L1.4 8.6 L1 10 M5.4 10.4 L3.2 12.6 L3.4 14.2 M10.4 5.6 L13.2 4.6 L14 3 M10.7 8 L14.2 8.6 L14.6 10 M10.2 10.4 L12.4 12.6 L12.2 14.2 M6.8 3.6 L6 0.8 M8.8 3.6 L9.6 0.8"/><ellipse cx="7.8" cy="7.9" rx="3.7" ry="5.1" fill="#f0f020" stroke="#4f4f0a" stroke-width="0.7"/><ellipse cx="7" cy="8.8" rx="1.5" ry="2.5" fill="#fff" fill-opacity="0.5" stroke="none"/></g></svg>
<div class="row" style="left:113px;top:200px;color:#232627"><span style="position:static;letter-spacing:0.23px">Comparison of </span><span style="position:static;letter-spacing:0.14px">String parameter </span><span style="position:static;letter-spacing:-0.25px">using == </span><span style="position:static;letter-spacing:0.39px">or </span><span style="position:static;letter-spacing:-0.5px">!= </span><span style="position:static;letter-spacing:-0.18px">in </span><span style="position:static;letter-spacing:-0.26px">wcPro.</span><span style="position:static;letter-spacing:0.12px">WordCountPro.</span><span style="position:static;letter-spacing:-0.35px">exec</span><span style="position:static;letter-spacing:0.34px">(String)</span><span style="position:static;margin-left:-4px">  [Troubling(11), High confidence]</span></div>
<svg style="left:94px;top:242px" width="16" height="16" viewBox="0 0 16 16"><g transform="rotate(38 7.8 7.6)" stroke="#4f4f0a" stroke-width="1" fill="none" stroke-linecap="round"><path d="M5.2 5.6 L2.4 4.6 L1.6 3 M4.9 8 L1.4 8.6 L1 10 M5.4 10.4 L3.2 12.6 L3.4 14.2 M10.4 5.6 L13.2 4.6 L14 3 M10.7 8 L14.2 8.6 L14.6 10 M10.2 10.4 L12.4 12.6 L12.2 14.2 M6.8 3.6 L6 0.8 M8.8 3.6 L9.6 0.8"/><ellipse cx="7.8" cy="7.9" rx="3.7" ry="5.1" fill="#f0f020" stroke="#4f4f0a" stroke-width="0.7"/><ellipse cx="7" cy="8.8" rx="1.5" ry="2.5" fill="#fff" fill-opacity="0.5" stroke="none"/></g></svg>
<div class="row" style="left:113px;top:233px;color:#232627"><span style="position:static;letter-spacing:0.23px">Comparison of </span><span style="position:static;letter-spacing:0.14px">String parameter </span><span style="position:static;letter-spacing:-0.25px">using == </span><span style="position:static;letter-spacing:0.39px">or </span><span style="position:static;letter-spacing:-0.5px">!= </span><span style="position:static;letter-spacing:-0.18px">in </span><span style="position:static;letter-spacing:-0.26px">wcPro.</span><span style="position:static;letter-spacing:0.12px">WordCountPro.</span><span style="position:static;letter-spacing:-0.35px">exec</span><span style="position:static;letter-spacing:0.34px">(String)</span><span style="position:static;margin-left:-4px">  [Troubling(11), High confidence]</span></div>
<svg style="left:25px;top:280px" width="10" height="5" viewBox="0 0 10 5"><path d="M0 0 L10 0 L5.0 5 Z" fill="#232627"/></svg>
<svg style="left:40px;top:275px" width="16" height="16" viewBox="0 0 16 16"><g transform="rotate(38 7.8 7.6)" stroke="#45550c" stroke-width="1" fill="none" stroke-linecap="round"><path d="M5.2 5.6 L2.4 4.6 L1.6 3 M4.9 8 L1.4 8.6 L1 10 M5.4 10.4 L3.2 12.6 L3.4 14.2 M10.4 5.6 L13.2 4.6 L14 3 M10.7 8 L14.2 8.6 L14.6 10 M10.2 10.4 L12.4 12.6 L12.2 14.2 M6.8 3.6 L6 0.8 M8.8 3.6 L9.6 0.8"/><ellipse cx="7.8" cy="7.9" rx="3.7" ry="5.1" fill="#b4d620" stroke="#45550c" stroke-width="0.7"/><ellipse cx="7" cy="8.8" rx="1.5" ry="2.5" fill="#fff" fill-opacity="0.5" stroke="none"/></g></svg>
<div class="row" style="left:59px;top:266px;color:#232627"><span style="position:static;letter-spacing:-.15px">Of Concern (8)</span></div>
<svg style="left:43px;top:313px" width="10" height="5" viewBox="0 0 10 5"><path d="M0 0 L10 0 L5.0 5 Z" fill="#232627"/></svg>
<svg style="left:58px;top:308px" width="16" height="16" viewBox="0 0 16 16"><rect x="0" y="0" width="2" height="5" fill="#f00"/><rect x="0" y="6" width="2.5" height="1.2" fill="#f00"/><g transform="rotate(38 7.8 7.6)" stroke="#2a0a22" stroke-width="1" fill="none" stroke-linecap="round"><path d="M5.2 5.6 L2.4 4.6 L1.6 3 M4.9 8 L1.4 8.6 L1 10 M5.4 10.4 L3.2 12.6 L3.4 14.2 M10.4 5.6 L13.2 4.6 L14 3 M10.7 8 L14.2 8.6 L14.6 10 M10.2 10.4 L12.4 12.6 L12.2 14.2 M6.8 3.6 L6 0.8 M8.8 3.6 L9.6 0.8"/><ellipse cx="7.8" cy="7.9" rx="3.7" ry="5.1" fill="#a8288c" stroke="#2a0a22" stroke-width="0.7"/><ellipse cx="7" cy="8.8" rx="1.5" ry="2.5" fill="#fff" fill-opacity="0.5" stroke="none"/></g></svg>
<div class="row" style="left:77px;top:299px;color:#232627">High confidence (8)</div>
<svg style="left:61px;top:346px" width="10" height="5" viewBox="0 0 10 5"><path d="M0 0 L10 0 L5.0 5 Z" fill="#232627"/></svg>
<svg style="left:76px;top:341px" width="16" height="16" viewBox="0 0 16 16"><g transform="rotate(38 7.8 7.6)" stroke="#111" stroke-width="1" fill="none" stroke-linecap="round"><path d="M5.2 5.6 L2.4 4.6 L1.6 3 M4.9 8 L1.4 8.6 L1 10 M5.4 10.4 L3.2 12.6 L3.4 14.2 M10.4 5.6 L13.2 4.6 L14 3 M10.7 8 L14.2 8.6 L14.6 10 M10.2 10.4 L12.4 12.6 L12.2 14.2 M6.8 3.6 L6 0.8 M8.8 3.6 L9.6 0.8"/><ellipse cx="7.8" cy="7.9" rx="3.7" ry="5.1" fill="#8a8a8a" stroke="#111" stroke-width="0.7"/><ellipse cx="7" cy="8.8" rx="1.5" ry="2.5" fill="#fff" fill-opacity="0.5" stroke="none"/></g></svg>
<div class="row" style="left:95px;top:332px;color:#232627"><span style="position:static;letter-spacing:-.04px">Dead store to local variable (8)</span></div>
<svg style="left:94px;top:374px" width="16" height="16" viewBox="0 0 16 16"><g transform="rotate(38 7.8 7.6)" stroke="#45550c" stroke-width="1" fill="none" stroke-linecap="round"><path d="M5.2 5.6 L2.4 4.6 L1.6 3 M4.9 8 L1.4 8.6 L1 10 M5.4 10.4 L3.2 12.6 L3.4 14.2 M10.4 5.6 L13.2 4.6 L14 3 M10.7 8 L14.2 8.6 L14.6 10 M10.2 10.4 L12.4 12.6 L12.2 14.2 M6.8 3.6 L6 0.8 M8.8 3.6 L9.6 0.8"/><ellipse cx="7.8" cy="7.9" rx="3.7" ry="5.1" fill="#b4d620" stroke="#45550c" stroke-width="0.7"/><ellipse cx="7" cy="8.8" rx="1.5" ry="2.5" fill="#fff" fill-opacity="0.5" stroke="none"/></g></svg>
<div class="row" style="left:113px;top:365px;color:#232627"><span style="position:static;letter-spacing:.1px">Dead store to test in </span><span style="position:static;letter-spacing:-.085px">wcPro.GetContentTest.BlankTest() </span><span style="position:static;letter-spacing:-.18px">[Of Concern(15), </span><span style="position:static;letter-spacing:.3px">High confidence]</span></div>
<svg style="left:94px;top:407px" width="16" height="16" viewBox="0 0 16 16"><g transform="rotate(38 7.8 7.6)" stroke="#45550c" stroke-width="1" fill="none" stroke-linecap="round"><path d="M5.2 5.6 L2.4 4.6 L1.6 3 M4.9 8 L1.4 8.6 L1 10 M5.4 10.4 L3.2 12.6 L3.4 14.2 M10.4 5.6 L13.2 4.6 L14 3 M10.7 8 L14.2 8.6 L14.6 10 M10.2 10.4 L12.4 12.6 L12.2 14.2 M6.8 3.6 L6 0.8 M8.8 3.6 L9.6 0.8"/><ellipse cx="7.8" cy="7.9" rx="3.7" ry="5.1" fill="#b4d620" stroke="#45550c" stroke-width="0.7"/><ellipse cx="7" cy="8.8" rx="1.5" ry="2.5" fill="#fff" fill-opacity="0.5" stroke="none"/></g></svg>
<div class="row" style="left:113px;top:398px;color:#232627"><span style="position:static;letter-spacing:.1px">Dead store to test in </span><span style="position:static;letter-spacing:-.085px">wcPro.GetContentTest.CharacterTest() </span><span style="position:static;letter-spacing:-.18px">[Of Concern(15), </span><span style="position:static;letter-spacing:.3px">High confidence]</span></div>
<svg style="left:94px;top:440px" width="16" height="16" viewBox="0 0 16 16"><g transform="rotate(38 7.8 7.6)" stroke="#45550c" stroke-width="1" fill="none" stroke-linecap="round"><path d="M5.2 5.6 L2.4 4.6 L1.6 3 M4.9 8 L1.4 8.6 L1 10 M5.4 10.4 L3.2 12.6 L3.4 14.2 M10.4 5.6 L13.2 4.6 L14 3 M10.7 8 L14.2 8.6 L14.6 10 M10.2 10.4 L12.4 12.6 L12.2 14.2 M6.8 3.6 L6 0.8 M8.8 3.6 L9.6 0.8"/><ellipse cx="7.8" cy="7.9" rx="3.7" ry="5.1" fill="#b4d620" stroke="#45550c" stroke-width="0.7"/><ellipse cx="7" cy="8.8" rx="1.5" ry="2.5" fill="#fff" fill-opacity="0.5" stroke="none"/></g></svg>
<div class="row" style="left:113px;top:431px;color:#232627"><span style="position:static;letter-spacing:.1px">Dead store to test in </span><span style="position:static;letter-spacing:-.085px">wcPro.GetContentTest.EnglishTest() </span><span style="position:static;letter-spacing:-.18px">[Of Concern(15), </span><span style="position:static;letter-spacing:.3px">High confidence]</span></div>
<svg style="left:94px;top:473px" width="16" height="16" viewBox="0 0 16 16"><g transform="rotate(38 7.8 7.6)" stroke="#45550c" stroke-width="1" fill="none" stroke-linecap="round"><path d="M5.2 5.6 L2.4 4.6 L1.6 3 M4.9 8 L1.4 8.6 L1 10 M5.4 10.4 L3.2 12.6 L3.4 14.2 M10.4 5.6 L13.2 4.6 L14 3 M10.7 8 L14.2 8.6 L14.6 10 M10.2 10.4 L12.4 12.6 L12.2 14.2 M6.8 3.6 L6 0.8 M8.8 3.6 L9.6 0.8"/><ellipse cx="7.8" cy="7.9" rx="3.7" ry="5.1" fill="#b4d620" stroke="#45550c" stroke-width="0.7"/><ellipse cx="7" cy="8.8" rx="1.5" ry="2.5" fill="#fff" fill-opacity="0.5" stroke="none"/></g></svg>
<div class="row" style="left:113px;top:464px;color:#232627"><span style="position:static;letter-spacing:.1px">Dead store to test in </span><span style="position:static;letter-spacing:-.085px">wcPro.GetContentTest.LineBreakTest() </span><span style="position:static;letter-spacing:-.18px">[Of Concern(15), </span><span style="position:static;letter-spacing:.3px">High confidence]</span></div>
<svg style="left:94px;top:506px" width="16" height="16" viewBox="0 0 16 16"><g transform="rotate(38 7.8 7.6)" stroke="#45550c" stroke-width="1" fill="none" stroke-linecap="round"><path d="M5.2 5.6 L2.4 4.6 L1.6 3 M4.9 8 L1.4 8.6 L1 10 M5.4 10.4 L3.2 12.6 L3.4 14.2 M10.4 5.6 L13.2 4.6 L14 3 M10.7 8 L14.2 8.6 L14.6 10 M10.2 10.4 L12.4 12.6 L12.2 14.2 M6.8 3.6 L6 0.8 M8.8 3.6 L9.6 0.8"/><ellipse cx="7.8" cy="7.9" rx="3.7" ry="5.1" fill="#b4d620" stroke="#45550c" stroke-width="0.7"/><ellipse cx="7" cy="8.8" rx="1.5" ry="2.5" fill="#fff" fill-opacity="0.5" stroke="none"/></g></svg>
<div class="row" style="left:113px;top:497px;color:#232627"><span style="position:static;letter-spacing:.1px">Dead store to test in </span><span style="position:static;letter-spacing:-.085px">wcPro.GetContentTest.NoCharacterTest() </span><span style="position:static;letter-spacing:-.18px">[Of Concern(15), </span><span style="position:static;letter-spacing:.3px">High confidence]</span></div>
<svg style="left:94px;top:539px" width="16" height="16" viewBox="0 0 16 16"><g transform="rotate(38 7.8 7.6)" stroke="#45550c" stroke-width="1" fill="none" stroke-linecap="round"><path d="M5.2 5.6 L2.4 4.6 L1.6 3 M4.9 8 L1.4 8.6 L1 10 M5.4 10.4 L3.2 12.6 L3.4 14.2 M10.4 5.6 L13.2 4.6 L14 3 M10.7 8 L14.2 8.6 L14.6 10 M10.2 10.4 L12.4 12.6 L12.2 14.2 M6.8 3.6 L6 0.8 M8.8 3.6 L9.6 0.8"/><ellipse cx="7.8" cy="7.9" rx="3.7" ry="5.1" fill="#b4d620" stroke="#45550c" stroke-width="0.7"/><ellipse cx="7" cy="8.8" rx="1.5" ry="2.5" fill="#fff" fill-opacity="0.5" stroke="none"/></g></svg>
<div class="row" style="left:113px;top:530px;color:#232627"><span style="position:static;letter-spacing:.1px">Dead store to test in </span><span style="position:static;letter-spacing:-.085px">wcPro.GetContentTest.NoCharTest() </span><span style="position:static;letter-spacing:-.18px">[Of Concern(15), </span><span style="position:static;letter-spacing:.3px">High confidence]</span></div>
<svg style="left:94px;top:572px" width="16" height="16" viewBox="0 0 16 16"><g transform="rotate(38 7.8 7.6)" stroke="#45550c" stroke-width="1" fill="none" stroke-linecap="round"><path d="M5.2 5.6 L2.4 4.6 L1.6 3 M4.9 8 L1.4 8.6 L1 10 M5.4 10.4 L3.2 12.6 L3.4 14.2 M10.4 5.6 L13.2 4.6 L14 3 M10.7 8 L14.2 8.6 L14.6 10 M10.2 10.4 L12.4 12.6 L12.2 14.2 M6.8 3.6 L6 0.8 M8.8 3.6 L9.6 0.8"/><ellipse cx="7.8" cy="7.9" rx="3.7" ry="5.1" fill="#b4d620" stroke="#45550c" stroke-width="0.7"/><ellipse cx="7" cy="8.8" rx="1.5" ry="2.5" fill="#fff" fill-opacity="0.5" stroke="none"/></g></svg>
<div class="row" style="left:113px;top:563px;color:#232627"><span style="position:static;letter-spacing:.1px">Dead store to test in </span><span style="position:static;letter-spacing:-.085px">wcPro.GetContentTest.NoFileTest() </span><span style="position:static;letter-spacing:-.18px">[Of Concern(15), </span><span style="position:static;letter-spacing:.3px">High confidence]</span></div>
<svg style="left:94px;top:605px" width="16" height="16" viewBox="0 0 16 16"><g transform="rotate(38 7.8 7.6)" stroke="#45550c" stroke-width="1" fill="none" stroke-linecap="round"><path d="M5.2 5.6 L2.4 4.6 L1.6 3 M4.9 8 L1.4 8.6 L1 10 M5.4 10.4 L3.2 12.6 L3.4 14.2 M10.4 5.6 L13.2 4.6 L14 3 M10.7 8 L14.2 8.6 L14.6 10 M10.2 10.4 L12.4 12.6 L12.2 14.2 M6.8 3.6 L6 0.8 M8.8 3.6 L9.6 0.8"/><ellipse cx="7.8" cy="7.9" rx="3.7" ry="5.1" fill="#b4d620" stroke="#45550c" stroke-width="0.7"/><ellipse cx="7" cy="8.8" rx="1.5" ry="2.5" fill="#fff" fill-opacity="0.5" stroke="none"/></g></svg>
<div class="row" style="left:113px;top:596px;color:#232627"><span style="position:static;letter-spacing:.1px">Dead store to test in </span><span style="position:static;letter-spacing:-.085px">wcPro.GetContentTest.NumberTest() </span><span style="position:static;letter-spacing:-.18px">[Of Concern(15), </span><span style="position:static;letter-spacing:.3px">High confidence]</span></div>
</div>
<div style="left:910px;top:129px;width:1009px;height:687px;background:#ffffff;border:1px solid #b8b8b8;border-radius:7px 7px 7px 6px"></div>
<div style="left:911px;top:130px;width:1006px;height:35px;background:#efefef;border-radius:6px 6px 0 0"></div>
<div style="left:911px;top:165px;width:1006px;height:1px;background:#c4c4c4;"></div>
<div style="left:911px;top:130px;width:230px;height:36px;background:#ffffff;border-radius:6px 7px 0 0;border-right:1px solid #c4c4c4"></div>
<svg style="left:918px;top:141px" width="11" height="15" viewBox="0 0 11 15"><path d="M0.5 0.5 H7.5 L10.5 3.5 V13.5 H0.5 Z" fill="#fbfbff" stroke="#b08a30" stroke-width="1"/><path d="M7.5 0.5 V3.5 H10.5 Z" fill="#f0dca8" stroke="#b08a30" stroke-width="0.7"/><path d="M5.9 3.4 V8.4 Q5.9 10.4 3.6 10.2" stroke="#2b62a8" stroke-width="1.9" fill="none"/><path d="M0.5 6.6 L4.3 14.4 H-3.3 Z" fill="#f9c74e" stroke="#d18a22" stroke-width="0.8" stroke-linejoin="round"/><rect x="0" y="9.2" width="1.1" height="3" fill="#3a1e08"/><rect x="0" y="12.8" width="1.1" height="1" fill="#3a1e08"/></svg>
<div class="t" style="left:935px;top:137px;color:#000">WordCountPro.java</div>
<svg style="left:1122px;top:143px" width="11" height="11" viewBox="0 0 11 11"><path d="M1 1 L3 1 L5.5 3.5 L8 1 L10 1 L10 3 L7.5 5.5 L10 8 L10 10 L8 10 L5.5 7.5 L3 10 L1 10 L1 8 L3.5 5.5 L1 3 Z" fill="#fdfdfd" stroke="#111" stroke-width="1.25"/></svg>
<svg style="left:1148px;top:141px" width="11" height="15" viewBox="0 0 11 15"><path d="M0.5 0.5 H7.5 L10.5 3.5 V13.5 H0.5 Z" fill="#fbfbff" stroke="#b08a30" stroke-width="1"/><path d="M7.5 0.5 V3.5 H10.5 Z" fill="#f0dca8" stroke="#b08a30" stroke-width="0.7"/><path d="M5.9 3.4 V8.4 Q5.9 10.4 3.6 10.2" stroke="#2b62a8" stroke-width="1.9" fill="none"/></svg>
<div class="t" style="left:1165px;top:137px;">CountWordTest.java</div>
<svg style="left:1383px;top:141px" width="11" height="15" viewBox="0 0 11 15"><path d="M0.5 0.5 H7.5 L10.5 3.5 V13.5 H0.5 Z" fill="#fbfbff" stroke="#b08a30" stroke-width="1"/><path d="M7.5 0.5 V3.5 H10.5 Z" fill="#f0dca8" stroke="#b08a30" stroke-width="0.7"/><path d="M5.9 3.4 V8.4 Q5.9 10.4 3.6 10.2" stroke="#2b62a8" stroke-width="1.9" fill="none"/><path d="M0.5 6.6 L4.3 14.4 H-3.3 Z" fill="#f9c74e" stroke="#d18a22" stroke-width="0.8" stroke-linejoin="round"/><rect x="0" y="9.2" width="1.1" height="3" fill="#3a1e08"/><rect x="0" y="12.8" width="1.1" height="1" fill="#3a1e08"/></svg>
<div class="t" style="left:1401px;top:137px;">GetContentTest.java</div>
<svg style="left:1863px;top:143px" width="10" height="4" viewBox="0 0 10 4"><rect x="0.6" y="0.6" width="8.8" height="2.8" fill="#fff" stroke="#111" stroke-width="1.2"/></svg>
<svg style="left:1889px;top:143px" width="10" height="10" viewBox="0 0 10 10"><rect x="0.6" y="0.6" width="8.8" height="8.8" fill="#fff" stroke="#111" stroke-width="1.2"/><path d="M0.6 2.5 H9.4" stroke="#111" stroke-width="1"/></svg>
<div style="left:913px;top:168px;width:12px;height:637px;background:#8ccaf0;background-image:repeating-conic-gradient(#2ba4ff 0% 25%, #ffffff 0% 50%);background-size:2px 2px"></div>
<div style="left:973px;top:384px;width:930px;height:24px;background:#e8ffff;"></div>
<div style="left:1905px;top:668px;width:9px;height:5px;background:#ffffd8;border:1px solid #ffe84a"></div>
<div style="left:1905px;top:682px;width:9px;height:5px;background:#ffffd8;border:1px solid #ffe84a"></div>
<svg style="left:960px;top:174px" width="11" height="11" viewBox="0 0 11 11"><circle cx="5.4" cy="5.4" r="4.3" fill="#d6e9fa" stroke="#b4c6e0" stroke-width="0.9"/><path d="M3 5.4 H7.8" stroke="#5478aa" stroke-width="1.1"/></svg>
<div class="clip" style="left:911px;top:166px;width:61px;height:639px">
<div class="ln" style="left:14.5px;top:1.5px">137</div>
<div class="ln" style="left:14.5px;top:25.5px">138</div>
<div class="ln" style="left:14.5px;top:49.5px">139</div>
<div class="ln" style="left:14.5px;top:73.5px">140</div>
<div class="ln" style="left:14.5px;top:97.5px">141</div>
<div class="ln" style="left:14.5px;top:121.5px">142</div>
<div class="ln" style="left:14.5px;top:145.5px">143</div>
<div class="ln" style="left:14.5px;top:169.5px">144</div>
<div class="ln" style="left:14.5px;top:193.5px">145</div>
<div class="ln" style="left:14.5px;top:217.5px">146</div>
<div class="ln" style="left:14.5px;top:241.5px">147</div>
<div class="ln" style="left:14.5px;top:265.5px">148</div>
<div class="ln" style="left:14.5px;top:289.5px">149</div>
<div class="ln" style="left:14.5px;top:313.5px">150</div>
<div class="ln" style="left:14.5px;top:337.5px">151</div>
<div class="ln" style="left:14.5px;top:361.5px">152</div>
<div class="ln" style="left:14.5px;top:385.5px">153</div>
<div class="ln" style="left:14.5px;top:409.5px">154</div>
<div class="ln" style="left:14.5px;top:433.5px">155</div>
<div class="ln" style="left:14.5px;top:457.5px">156</div>
<div class="ln" style="left:14.5px;top:481.5px">157</div>
<div class="ln" style="left:14.5px;top:505.5px">158</div>
<div class="ln" style="left:14.5px;top:529.5px">159</div>
<div class="ln" style="left:14.5px;top:553.5px">160</div>
<div class="ln" style="left:14.5px;top:577.5px">161</div>
<div class="ln" style="left:14.5px;top:601.5px">162</div>
<div class="ln" style="left:14.5px;top:625.5px">163</div>
</div>
<div class="clip" style="left:972px;top:166px;width:931px;height:646px">
<div class="code" style="left:1px;top:2px">    <span class="k">public static</span> String exec(String <span class="v">argsinfo</span>)</div>
<div class="code" style="left:1px;top:26px">    {</div>
<div class="code" style="left:1px;top:50px">        String <span class="v">err</span> = <span class="k">null</span>;</div>
<div class="code" style="left:1px;top:74px">        <span class="k">if</span>( <span class="v">argsinfo</span> == <span class="k">null</span> )<span class="c">//Lack of input</span></div>
<div class="code" style="left:1px;top:98px">        {</div>
<div class="code" style="left:1px;top:122px">            <span class="v">err</span> = <span class="s">"args err"</span>;</div>
<div class="code" style="left:1px;top:146px">            <span class="k">return</span> <span class="v">err</span>;</div>
<div class="code" style="left:1px;top:170px">        }</div>
<div class="code" style="left:1px;top:194px">        <span class="k">if</span>(<span class="v">argsinfo</span> == <span class="s">"No input"</span> || <span class="v">argsinfo</span> == <span class="s">"More than one input"</span> || <span class="v">argsinfo</span> == <span class="s">"-x"</span>)</div>
<div class="code" style="left:1px;top:218px">        {</div>
<div class="code" style="left:1px;top:242px">            <span class="k">return</span> <span class="v">argsinfo</span>;</div>
<div class="code" style="left:1px;top:266px">        }<span class="c">//when <span style="text-decoration:underline wavy #e07a38 1px;text-underline-offset:3px">args</span>  err</span></div>
<div class="code" style="left:1px;top:290px">        <span class="k">else if</span>(<span class="v">argsinfo</span> == <span class="s">"-x"</span> )<span class="c">//when first input is -x</span></div>
<div class="code" style="left:1px;top:314px">        {</div>
<div class="code" style="left:1px;top:338px">                Window  <span class="v">guiWnd</span> = <span class="k">new</span> Window();</div>
<div class="code" style="left:1px;top:362px">                <span class="v">guiWnd</span>.showDialog();</div>
<div class="code" style="left:1px;top:386px">        }</div>
<div class="code" style="left:1px;top:410px">        <span class="k">else</span> <span class="c">// when normal situation return path</span></div>
<div class="code" style="left:1px;top:434px">        {</div>
<div class="code" style="left:1px;top:458px">        String <span class="v">content</span> = <span class="i">getContent</span>(<span class="v">argsinfo</span>);</div>
<div class="code" style="left:1px;top:482px">        <span class="k">if</span>(<span class="v">content</span>==<span class="k">null</span>)</div>
<div class="code" style="left:1px;top:506px">        {</div>
<div class="code" style="left:1px;top:530px">            <span class="v">err</span> = <span class="s">"file does not exist"</span>;</div>
<div class="code" style="left:1px;top:554px">            <span class="k">return</span> <span class="v">err</span>;</div>
<div class="code" style="left:1px;top:578px">        }</div>
<div class="code" style="left:1px;top:602px">        Map&lt;String, Integer&gt; <span class="v">map</span> = <span class="i">countWord</span>(<span class="v">content</span>);</div>
<div class="code" style="left:1px;top:626px">            <span class="k">if</span>(!<span class="i">writeOutput</span>(<span class="v">map</span>))</div>
</div>
<div class="clip" style="left:913px;top:360px;width:12px;height:120px">
<svg style="left:-1px;top:3.5px" width="16" height="16" viewBox="0 0 16 16"><g transform="rotate(38 7.8 7.6)" stroke="#4f4f0a" stroke-width="1" fill="none" stroke-linecap="round"><path d="M5.2 5.6 L2.4 4.6 L1.6 3 M4.9 8 L1.4 8.6 L1 10 M5.4 10.4 L3.2 12.6 L3.4 14.2 M10.4 5.6 L13.2 4.6 L14 3 M10.7 8 L14.2 8.6 L14.6 10 M10.2 10.4 L12.4 12.6 L12.2 14.2 M6.8 3.6 L6 0.8 M8.8 3.6 L9.6 0.8"/><ellipse cx="7.8" cy="7.9" rx="3.7" ry="5.1" fill="#f4f020" stroke="#4f4f0a" stroke-width="0.7"/><ellipse cx="7" cy="8.8" rx="1.5" ry="2.5" fill="#fff" fill-opacity="0.5" stroke="none"/></g></svg>
<svg style="left:-1px;top:99.5px" width="16" height="16" viewBox="0 0 16 16"><g transform="rotate(38 7.8 7.6)" stroke="#4f4f0a" stroke-width="1" fill="none" stroke-linecap="round"><path d="M5.2 5.6 L2.4 4.6 L1.6 3 M4.9 8 L1.4 8.6 L1 10 M5.4 10.4 L3.2 12.6 L3.4 14.2 M10.4 5.6 L13.2 4.6 L14 3 M10.7 8 L14.2 8.6 L14.6 10 M10.2 10.4 L12.4 12.6 L12.2 14.2 M6.8 3.6 L6 0.8 M8.8 3.6 L9.6 0.8"/><ellipse cx="7.8" cy="7.9" rx="3.7" ry="5.1" fill="#f4f020" stroke="#4f4f0a" stroke-width="0.7"/><ellipse cx="7" cy="8.8" rx="1.5" ry="2.5" fill="#fff" fill-opacity="0.5" stroke="none"/></g></svg>
</div>
<div style="left:910px;top:820px;width:452px;height:201px;background:#efefef;border:1px solid #b8b8b8;border-radius:7px 7px 4px 4px"></div>
<div style="left:913px;top:858px;width:446px;height:161px;background:#f0ffff;"></div>
<div style="left:911px;top:821px;width:450px;height:35px;background:#dedede;border-radius:6px 6px 0 0"></div>
<div style="left:911px;top:856px;width:450px;height:1px;background:#c4c4c4;"></div>
<div style="left:911px;top:821px;width:166px;height:36px;background:#efefef;border-radius:6px 8px 0 0;border-right:1px solid #c4c4c4"></div>
<svg style="left:915px;top:831px" width="16" height="16" viewBox="0 0 16 16"><g transform="rotate(38 7.8 7.6)" stroke="#6e0a0a" stroke-width="1" fill="none" stroke-linecap="round"><path d="M5.2 5.6 L2.4 4.6 L1.6 3 M4.9 8 L1.4 8.6 L1 10 M5.4 10.4 L3.2 12.6 L3.4 14.2 M10.4 5.6 L13.2 4.6 L14 3 M10.7 8 L14.2 8.6 L14.6 10 M10.2 10.4 L12.4 12.6 L12.2 14.2 M6.8 3.6 L6 0.8 M8.8 3.6 L9.6 0.8"/><ellipse cx="7.8" cy="7.9" rx="3.7" ry="5.1" fill="#e02020" stroke="#6e0a0a" stroke-width="0.7"/><ellipse cx="7" cy="8.8" rx="1.5" ry="2.5" fill="#fff" fill-opacity="0.5" stroke="none"/></g></svg>
<svg style="left:915px;top:831px" width="6" height="7" viewBox="0 0 6 7"><path d="M1 6 L4.5 0.8" stroke="#c98a3c" stroke-width="1.8"/></svg>
<div class="t" style="left:935px;top:828px;color:#000;letter-spacing:-.22px">Bug Reviews</div>
<svg style="left:1059px;top:834px" width="11" height="11" viewBox="0 0 11 11"><path d="M1 1 L3 1 L5.5 3.5 L8 1 L10 1 L10 3 L7.5 5.5 L10 8 L10 10 L8 10 L5.5 7.5 L3 10 L1 10 L1 8 L3.5 5.5 L1 3 Z" fill="#fdfdfd" stroke="#111" stroke-width="1.25"/></svg>
<svg style="left:1275px;top:830px" width="10" height="6" viewBox="0 0 10 6"><path d="M0.8 0.6 L9.2 0.6 L5 5 Z" fill="#fff" stroke="#111" stroke-width="1.1"/></svg>
<svg style="left:1306px;top:834px" width="10" height="4" viewBox="0 0 10 4"><rect x="0.6" y="0.6" width="8.8" height="2.8" fill="#fff" stroke="#111" stroke-width="1.2"/></svg>
<svg style="left:1332px;top:834px" width="10" height="10" viewBox="0 0 10 10"><rect x="0.6" y="0.6" width="8.8" height="8.8" fill="#fff" stroke="#111" stroke-width="1.2"/><path d="M0.6 2.5 H9.4" stroke="#111" stroke-width="1"/></svg>
<div style="left:918px;top:864px;width:236px;height:38px;background:#ededed;border:1px solid #e0e0e0;border-radius:3px"></div>
<svg style="left:1136px;top:881px" width="10" height="5" viewBox="0 0 10 5"><path d="M0 0 L10 0 L5.0 5 Z" fill="#a0a0a0"/></svg>
<div class="clip" style="left:1200px;top:860px;width:159px;height:70px"><div class="t" style="left:55.3px;top:12px">(no cloud selected)</div><div class="t" style="left:57.3px;top:39px">No signin required</div></div>
<div style="left:918px;top:940px;width:436px;height:18px;background:#ffffff;border:1px solid #c8c8c8"></div>
<div class="t" style="left:918px;top:965px;">Cloud info:</div>
<div style="left:918px;top:995px;width:436px;height:18px;background:#ffffff;border:1px solid #c8c8c8"></div>
<div style="left:1366px;top:820px;width:552px;height:201px;background:#ffffff;border:1px solid #b8b8b8;border-radius:7px 7px 4px 4px"></div>
<div style="left:1367px;top:821px;width:550px;height:35px;background:#dedede;border-radius:6px 6px 0 0"></div>
<div style="left:1367px;top:856px;width:550px;height:1px;background:#c4c4c4;"></div>
<div style="left:1367px;top:821px;width:129px;height:36px;background:#efefef;border-radius:6px 8px 0 0;border-right:1px solid #c4c4c4"></div>
<div style="left:1367px;top:857px;width:550px;height:31px;background:#efefef;"></div>
<div style="left:1369px;top:888px;width:547px;height:29px;background:#dedede;"></div>
<div style="left:1916px;top:857px;width:1px;height:162px;background:#efefef;"></div>
<div style="left:1367px;top:917px;width:2px;height:102px;background:#efefef;"></div>
<svg style="left:1371px;top:831px" width="16" height="16" viewBox="0 0 16 16"><g transform="rotate(38 7.8 7.6)" stroke="#6e0a0a" stroke-width="1" fill="none" stroke-linecap="round"><path d="M5.2 5.6 L2.4 4.6 L1.6 3 M4.9 8 L1.4 8.6 L1 10 M5.4 10.4 L3.2 12.6 L3.4 14.2 M10.4 5.6 L13.2 4.6 L14 3 M10.7 8 L14.2 8.6 L14.6 10 M10.2 10.4 L12.4 12.6 L12.2 14.2 M6.8 3.6 L6 0.8 M8.8 3.6 L9.6 0.8"/><ellipse cx="7.8" cy="7.9" rx="3.7" ry="5.1" fill="#e02020" stroke="#6e0a0a" stroke-width="0.7"/><ellipse cx="7" cy="8.8" rx="1.5" ry="2.5" fill="#fff" fill-opacity="0.5" stroke="none"/></g></svg>
<svg style="left:1371px;top:831px" width="6" height="7" viewBox="0 0 6 7"><path d="M1 6 L4.5 0.8" stroke="#c98a3c" stroke-width="1.8"/></svg>
<div class="t" style="left:1391px;top:828px;color:#000;letter-spacing:.5px">Bug Info</div>
<svg style="left:1478px;top:834px" width="11" height="11" viewBox="0 0 11 11"><path d="M1 1 L3 1 L5.5 3.5 L8 1 L10 1 L10 3 L7.5 5.5 L10 8 L10 10 L8 10 L5.5 7.5 L3 10 L1 10 L1 8 L3.5 5.5 L1 3 Z" fill="#fdfdfd" stroke="#111" stroke-width="1.25"/></svg>
<svg style="left:1726px;top:827px" width="16" height="16" viewBox="0 0 16 16"><g transform="rotate(38 7.8 7.6)" stroke="#6e0a0a" stroke-width="1" fill="none" stroke-linecap="round"><path d="M5.2 5.6 L2.4 4.6 L1.6 3 M4.9 8 L1.4 8.6 L1 10 M5.4 10.4 L3.2 12.6 L3.4 14.2 M10.4 5.6 L13.2 4.6 L14 3 M10.7 8 L14.2 8.6 L14.6 10 M10.2 10.4 L12.4 12.6 L12.2 14.2 M6.8 3.6 L6 0.8 M8.8 3.6 L9.6 0.8"/><ellipse cx="7.8" cy="7.9" rx="3.7" ry="5.1" fill="#e02020" stroke="#6e0a0a" stroke-width="0.7"/><ellipse cx="7" cy="8.8" rx="1.5" ry="2.5" fill="#fff" fill-opacity="0.5" stroke="none"/></g></svg>
<svg style="left:1763px;top:827px" width="16" height="16" viewBox="0 0 16 16"><g transform="rotate(38 7.8 7.6)" stroke="#6e0a0a" stroke-width="1" fill="none" stroke-linecap="round"><path d="M5.2 5.6 L2.4 4.6 L1.6 3 M4.9 8 L1.4 8.6 L1 10 M5.4 10.4 L3.2 12.6 L3.4 14.2 M10.4 5.6 L13.2 4.6 L14 3 M10.7 8 L14.2 8.6 L14.6 10 M10.2 10.4 L12.4 12.6 L12.2 14.2 M6.8 3.6 L6 0.8 M8.8 3.6 L9.6 0.8"/><ellipse cx="7.8" cy="7.9" rx="3.7" ry="5.1" fill="#e02020" stroke="#6e0a0a" stroke-width="0.7"/><ellipse cx="7" cy="8.8" rx="1.5" ry="2.5" fill="#fff" fill-opacity="0.5" stroke="none"/></g></svg>
<svg style="left:1789px;top:827px" width="16" height="16" viewBox="0 0 16 16"><g transform="rotate(38 7.8 7.6)" stroke="#6e0a0a" stroke-width="1" fill="none" stroke-linecap="round"><path d="M5.2 5.6 L2.4 4.6 L1.6 3 M4.9 8 L1.4 8.6 L1 10 M5.4 10.4 L3.2 12.6 L3.4 14.2 M10.4 5.6 L13.2 4.6 L14 3 M10.7 8 L14.2 8.6 L14.6 10 M10.2 10.4 L12.4 12.6 L12.2 14.2 M6.8 3.6 L6 0.8 M8.8 3.6 L9.6 0.8"/><ellipse cx="7.8" cy="7.9" rx="3.7" ry="5.1" fill="#e02020" stroke="#6e0a0a" stroke-width="0.7"/><ellipse cx="7" cy="8.8" rx="1.5" ry="2.5" fill="#fff" fill-opacity="0.5" stroke="none"/></g></svg>
<svg style="left:1763px;top:827px" width="6" height="7" viewBox="0 0 6 7"><path d="M1 6 L4.5 0.8" stroke="#c98a3c" stroke-width="1.8"/></svg>
<svg style="left:1789px;top:827px" width="8" height="12" viewBox="0 0 8 12"><path d="M1.5 1.5 V9.2 H3.5 M1.5 5.5 H3.5" stroke="#4a78c2" stroke-width="0.9" fill="none"/><rect x="0.5" y="0.5" width="2" height="2" fill="#fff" stroke="#4a78c2" stroke-width="0.7"/><rect x="3.2" y="4.5" width="2" height="2" fill="#fff" stroke="#4a78c2" stroke-width="0.7"/><rect x="3.2" y="8.2" width="2" height="2" fill="#fff" stroke="#4a78c2" stroke-width="0.7"/></svg>
<svg style="left:1832px;top:830px" width="10" height="6" viewBox="0 0 10 6"><path d="M0.8 0.6 L9.2 0.6 L5 5 Z" fill="#fff" stroke="#111" stroke-width="1.1"/></svg>
<svg style="left:1863px;top:834px" width="10" height="4" viewBox="0 0 10 4"><rect x="0.6" y="0.6" width="8.8" height="2.8" fill="#fff" stroke="#111" stroke-width="1.2"/></svg>
<svg style="left:1889px;top:834px" width="10" height="10" viewBox="0 0 10 10"><rect x="0.6" y="0.6" width="8.8" height="8.8" fill="#fff" stroke="#111" stroke-width="1.2"/><path d="M0.6 2.5 H9.4" stroke="#111" stroke-width="1"/></svg>
<div class="t" style="left:1370px;top:861px;letter-spacing:-.08px">WordCountPro.java: 145</div>
<svg style="left:1370px;top:897px" width="9" height="9" viewBox="0 0 9 9"><rect x="0.5" y="0.5" width="8" height="8" fill="#f4f4f4" stroke="#b0b0b0"/><path d="M2.5 4.5 H6.5" stroke="#777" stroke-width="1"/></svg>
<div class="t" style="left:1384px;top:889px;letter-spacing:.52px">Navigation</div>
<div class="clip" style="left:1370px;top:918px;width:545px;height:100px;background:#fff"><div class="row" style="left:4px;top:0px"><span style="position:static;letter-spacing:0.23px">Comparison of </span><span style="position:static;letter-spacing:0.14px">String parameter </span><span style="position:static;letter-spacing:-0.25px">using == </span><span style="position:static;letter-spacing:0.39px">or </span><span style="position:static;letter-spacing:-0.5px">!= </span><span style="position:static;letter-spacing:-0.18px">in </span><span style="position:static;letter-spacing:-0.26px">wcPro.</span><span style="position:static;letter-spacing:0.12px">WordCountPro.</span><span style="position:static;letter-spacing:-0.35px">exec</span><span style="position:static;letter-spacing:0.34px">(String)</span></div><div class="row" style="left:4px;top:33px">Actual type String</div><div class="row" style="left:4px;top:66px;letter-spacing:.23px">String constant "More than one input"</div></div>
<div style="left:833px;top:1022px;width:1px;height:24px;background:#d0d0d0;"></div>
<div style="left:996px;top:1022px;width:1px;height:24px;background:#d0d0d0;"></div>
<div style="left:1149px;top:1022px;width:1px;height:24px;background:#d0d0d0;"></div>
<div class="t" style="left:839px;top:1021px;letter-spacing:.5px">Writable</div>
<div class="t" style="left:1002px;top:1021px;letter-spacing:.4px">Smart Insert</div>
<div class="t" style="left:1156px;top:1021px;letter-spacing:-.3px">146 : 5</div>
<svg style="left:1300px;top:1025px" width="3" height="20" viewBox="0 0 3 20"><rect x="0.4" y="0.0" width="1.8" height="2.2" fill="#a29679"/><rect x="0.4" y="4.4" width="1.8" height="2.2" fill="#a29679"/><rect x="0.4" y="8.8" width="1.8" height="2.2" fill="#a29679"/><rect x="0.4" y="13.2" width="1.8" height="2.2" fill="#a29679"/><rect x="0.4" y="17.6" width="1.8" height="2.2" fill="#a29679"/></svg>
<svg style="left:1730px;top:1025px" width="3" height="20" viewBox="0 0 3 20"><rect x="0.4" y="0.0" width="1.8" height="2.2" fill="#a29679"/><rect x="0.4" y="4.4" width="1.8" height="2.2" fill="#a29679"/><rect x="0.4" y="8.8" width="1.8" height="2.2" fill="#a29679"/><rect x="0.4" y="13.2" width="1.8" height="2.2" fill="#a29679"/><rect x="0.4" y="17.6" width="1.8" height="2.2" fill="#a29679"/></svg>
<div style="left:1895px;top:1027px;width:15px;height:15px;background:linear-gradient(#ff8a1c,#f57a10);border-radius:3px"></div>
<svg style="left:1895px;top:1027px" width="15" height="15" viewBox="0 0 17 17"><circle cx="5" cy="12.5" r="1.6" fill="#fff"/><path d="M3.5 7.5 A6 6 0 0 1 9.5 13.5 M3.5 3.5 A10 10 0 0 1 13.5 13.5" stroke="#fff" stroke-width="1.8" fill="none"/></svg>
<svg style="left:1744px;top:1029px" width="17" height="12" viewBox="0 0 17 12"><path d="M0.8 4.2 L5.5 0.8 L11 1.8 L11.5 4.5 L6 4 L3 6.5 Z" fill="#fafafa" stroke="#555" stroke-width="0.9"/><rect x="7.5" y="4.2" width="8" height="6.6" fill="#f3cf6a" stroke="#a8842a" stroke-width="0.9"/><path d="M7.5 6.2 H15.5" stroke="#a8842a" stroke-width="0.7"/></svg>
<svg style="left:1782px;top:1029px" width="16" height="13" viewBox="0 0 16 13"><path d="M1 2.2 L5.5 0.8 L10.5 2.2 L15 0.8 V10.8 L10.5 12.2 L5.5 10.8 L1 12.2 Z M5.5 0.8 V10.8 M10.5 2.2 V12.2" fill="#f6ede4" stroke="#ff9a30" stroke-width="1.1"/></svg>
<svg style="left:1808px;top:1030px" width="16" height="11" viewBox="0 0 16 11"><path d="M8 0.5 L15.5 3.5 L8 6.5 L0.5 3.5 Z" fill="#ff9a30"/><path d="M3.8 5.6 V8.4 Q8 11.4 12.2 8.4 V5.6 L8 7.4 Z" fill="#ff9a30"/><path d="M2 4.3 V9.8" stroke="#ff9a30" stroke-width="0.9"/></svg>
<svg style="left:1835px;top:1028px" width="14" height="13" viewBox="0 0 14 13"><path d="M1 12 L9.5 3.5" stroke="#ff9a30" stroke-width="2.2"/><path d="M10 2.8 L12 1" stroke="#ff9a30" stroke-width="2.2"/><path d="M5 1 L6 2 M8.2 0.3 V1.4 M12.5 5.5 L13.5 6.2" stroke="#ff9a30" stroke-width="0.8"/></svg>
<svg style="left:1861px;top:1028px" width="14" height="14" viewBox="0 0 14 14"><circle cx="7" cy="7" r="6.2" fill="none" stroke="#ff9a30" stroke-width="1.2"/><path d="M7 3 L8.1 5.7 L11 5.9 L8.8 7.8 L9.5 10.6 L7 9.1 L4.5 10.6 L5.2 7.8 L3 5.9 L5.9 5.7 Z" fill="none" stroke="#ff9a30" stroke-width="1"/></svg>
<div style="left:0px;top:1044px;width:1920px;height:36px;background:#8a899b;"></div>
<div style="left:0px;top:1043px;width:1920px;height:6px;background:linear-gradient(#ececec,#d2d2d2 35%,#8c8c92 75%,#88879a);"></div>
<div style="left:40px;top:1049px;width:377px;height:3px;background:#778a88;"></div>
<div style="left:419px;top:1049px;width:380px;height:3px;background:#4eaae2;"></div>
<svg style="left:6px;top:1054px" width="20" height="18" viewBox="0 0 20 18"><circle cx="6" cy="3" r="1.3" fill="#232627"/><circle cx="3.4" cy="9.3" r="1.5" fill="#232627"/><circle cx="8" cy="15.5" r="1.9" fill="#232627"/><path d="M12.5 3 L16.5 7 L12.5 11" stroke="#232627" stroke-width="2.6" fill="none"/></svg>
<svg style="left:44px;top:1054px" width="21" height="21" viewBox="0 0 22 22"><circle cx="11" cy="11" r="10.5" fill="#fff"/><path d="M11 11 L1.9 5.75 A10.5 10.5 0 0 1 20.1 5.75 Z" fill="#ea4335"/><path d="M11 11 L20.1 5.75 A10.5 10.5 0 0 1 11 21.5 Z" fill="#fbbc05"/><path d="M11 11 L11 21.5 A10.5 10.5 0 0 1 1.9 5.75 Z" fill="#34a853"/><circle cx="11" cy="11" r="4.8" fill="#fff"/><circle cx="11" cy="11" r="3.8" fill="#4285f4"/></svg>
<div class="t" style="left:72px;top:1053px;letter-spacing:.2px">YinshenYuan/wcPro: A simple pro...</div>
<svg style="left:423px;top:1054px" width="22" height="20.5" viewBox="0 0 30 28"><circle cx="14" cy="14" r="13" fill="#f7991c"/><circle cx="16.5" cy="14.1" r="12.7" fill="#231f55" stroke="#1a1438" stroke-width="0.6"/><ellipse cx="16.5" cy="21.5" rx="6.5" ry="2.8" fill="#4a38a8" opacity=".85"/><rect x="4.6" y="10" width="23.8" height="2.1" fill="#f4f2fb"/><rect x="4.1" y="13" width="24.8" height="2.1" fill="#e8e4f8"/><rect x="4.6" y="16" width="23.8" height="2.1" fill="#f4f2fb"/></svg>
<div class="t" style="left:452px;top:1053px;letter-spacing:.13px">eclipse-workspace - wcPro/src/wc...</div>
<svg style="left:1368px;top:1056px" width="16" height="16" viewBox="0 0 16 16"><rect x="0.6" y="0.6" width="14.8" height="14.8" fill="none" stroke="#2a2c30" stroke-width="1.2"/><path d="M2.5 2.8 L5.5 5.8 M5.5 2.8 L2.5 5.8 M10.5 2.8 L13.5 5.8 M13.5 2.8 L10.5 5.8 M3 12.8 Q8 6.5 13 12.8" stroke="#2a2c30" stroke-width="1.2" fill="none" stroke-dasharray="1.6 1"/></svg>
<svg style="left:1397px;top:1055px" width="18" height="18" viewBox="0 0 18 18"><circle cx="8.5" cy="8.5" r="7.6" fill="none" stroke="#2a2c30" stroke-width="1"/><path d="M8.5 3.6 L12.3 8 H10.2 V12.6 H6.8 V8 H4.7 Z" fill="#2a2c30"/><circle cx="13.8" cy="14.4" r="3.1" fill="#3daee9"/></svg>
<svg style="left:1427px;top:1055px" width="19" height="17" viewBox="0 0 19 17"><rect x="0.6" y="6" width="17.4" height="10.4" rx="0.8" fill="none" stroke="#2a2c30" stroke-width="1.2"/><path d="M2.8 9 H16 M2.8 11.3 H16 M4.5 13.8 H14" stroke="#2a2c30" stroke-width="1.2" fill="none" stroke-dasharray="1.5 0.9"/><path d="M9.5 6 V3.5 Q9.5 2.5 10.5 2.3 L12.2 1.8 V0.4" stroke="#2a2c30" stroke-width="1" fill="none"/></svg>
<svg style="left:1455px;top:1053px" width="22" height="22" viewBox="0 0 22 22"><rect width="22" height="22" fill="#0c7ce2"/><circle cx="11" cy="11" r="9.2" fill="#fff"/><path d="M3 11 L8 7.2 V9.8 H14 V7.2 L19 11 L14 14.8 V12.2 H8 V14.8 Z" fill="#0c7ce2"/></svg>
<svg style="left:1487px;top:1055px" width="18" height="19" viewBox="0 0 18 19"><circle cx="9" cy="5" r="3.6" fill="none" stroke="#d4d4dc" stroke-width="1.1"/><path d="M1.5 17.5 Q2.5 10.8 9 10.6" fill="none" stroke="#d4d4dc" stroke-width="1.1"/><circle cx="13.6" cy="14" r="3.4" fill="#f4f4f8"/><path d="M11.8 14 H15.4" stroke="#8a899b" stroke-width="1.2"/></svg>
<svg style="left:1517px;top:1056px" width="18" height="16" viewBox="0 0 18 16"><rect x="5.6" y="0.6" width="11.4" height="11.6" fill="none" stroke="#2a2c30" stroke-width="1.2"/><rect x="0.8" y="0.6" width="4.6" height="5.6" fill="none" stroke="#2a2c30" stroke-width="1.1"/><path d="M2 2.2 H4.2" stroke="#2a2c30" stroke-width="0.9"/><path d="M2.5 6.2 V12.5 Q2.5 14.8 5 14.8 H6" stroke="#2a2c30" stroke-width="1" fill="none"/><path d="M7.5 15.3 H15 M11.3 12.2 V15.3" stroke="#2a2c30" stroke-width="1.3"/></svg>
<svg style="left:1549px;top:1056px" width="15" height="16" viewBox="0 0 15 16"><rect x="0.6" y="2.6" width="13.4" height="12.8" fill="none" stroke="#2a2c30" stroke-width="1.2"/><rect x="3.6" y="0.4" width="7.4" height="3.6" fill="#2a2c30"/><path d="M3.2 7.5 H11.2 M3.2 10 H11.2 M3.2 12.5 H7.5" stroke="#2a2c30" stroke-width="1.1"/></svg>
<svg style="left:1578px;top:1055px" width="18" height="18" viewBox="0 0 18 18"><path d="M0.5 6.5 H2.5 L8.5 1 V17 L2.5 11.5 H0.5 Z" fill="#2a2c30"/><path d="M10 9.2 H16.4" stroke="#e8354f" stroke-width="1.7"/></svg>
<svg style="left:1613px;top:1060px" width="17" height="8" viewBox="0 0 17 8"><path d="M8.3 0 L16.6 8 H0 Z" fill="#2a2c30"/></svg>
<div class="t" style="left:1654px;top:1054px;font-family:"Liberation Sans", "Noto Sans CJK TC", "Noto Sans CJK SC", sans-serif;font-size:20.7px">11:25 <span style="position:static;font-size:19.6px;letter-spacing:-.2px">上午</span></div>
<svg style="left:1773px;top:1056px" width="16" height="16" viewBox="0 0 16 16"><rect x="0.6" y="0.6" width="14.6" height="14.8" fill="none" stroke="#2a2c30" stroke-width="1.1"/><path d="M2 13 H13.8" stroke="#2a2c30" stroke-width="1"/></svg>
<div style="left:1803px;top:1049px;width:20px;height:30px;background:#8d8c9e;border:1px solid #777686;border-radius:4px"></div>
<div style="left:1804px;top:1072px;width:18px;height:6px;background:#3daee9;border-radius:0 0 3px 3px"></div>
<div style="left:1828px;top:1049px;width:20px;height:30px;background:#8d8c9e;border:1px solid #777686;border-radius:4px"></div>
<div style="left:1829px;top:1063px;width:18px;height:15px;background:#3daee9;border-radius:0 0 3px 3px"></div>
<div style="left:1829px;top:1069px;width:18px;height:1px;background:#5a8cb8;"></div>
<div style="left:1852px;top:1049px;width:20px;height:30px;background:#8d8c9e;border:1px solid #777686;border-radius:4px"></div>
<svg style="left:1887px;top:1056px" width="18" height="16" viewBox="0 0 18 16"><path d="M0 2 H18 M0 8.2 H18 M0 14.1 H18" stroke="#52675f" stroke-width="3"/></svg>
<div style="left:1734px;top:1021px;width:152px;height:26px;border:1px solid #b4b4b4;border-bottom-color:#a0a0a8"></div>
<div style="left:1735px;top:1043px;width:150px;height:3px;background:#efefef"></div>
</div>
</body></html>
